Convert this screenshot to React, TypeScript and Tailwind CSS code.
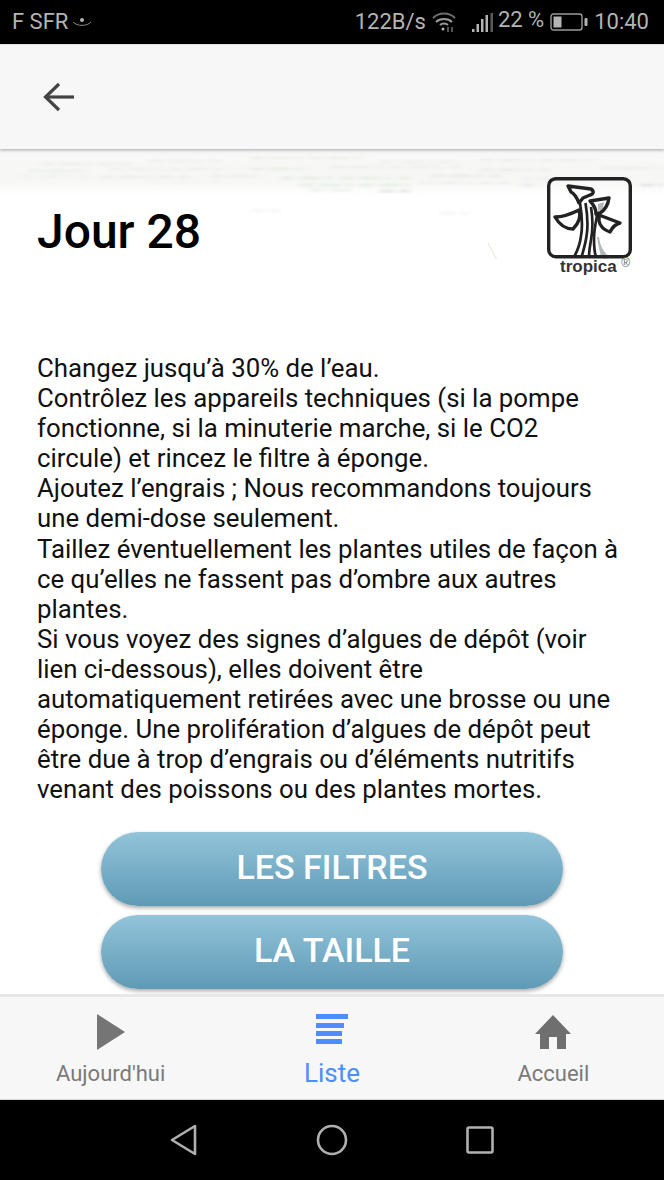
const bodyLines = [
  "Changez jusqu’à 30% de l’eau.",
  "Contrôlez les appareils techniques (si la pompe fonctionne, si la minuterie marche, si le CO2 circule) et rincez le filtre à éponge.",
  "Ajoutez l’engrais ; Nous recommandons toujours une demi-dose seulement.",
  "Taillez éventuellement les plantes utiles de façon à ce qu’elles ne fassent pas d’ombre aux autres plantes.",
  "Si vous voyez des signes d’algues de dépôt (voir lien ci-dessous), elles doivent être automatiquement retirées avec une brosse ou une éponge. Une prolifération d’algues de dépôt peut être due à trop d’engrais ou d’éléments nutritifs venant des poissons ou des plantes mortes.",
];

// faint water streaks of the background picture: x, y, length, colour
const streaks: [number, number, number, string][] = [
  [40, 15, 90, "#eef0ee"], [150, 12, 70, "#eef1ec"], [250, 9, 110, "#edf1e9"], [380, 13, 80, "#efefef"], [480, 11, 120, "#eef0ee"],
  [30, 22, 60, "#ecefec"], [110, 20, 120, "#eff1ef"], [250, 20, 60, "#e9eee5"], [330, 18, 130, "#edf0eb"], [480, 21, 70, "#ececec"], [600, 19, 64, "#eeeeee"],
  [20, 27, 70, "#f1f3f1"], [100, 28, 90, "#ecefe9"], [210, 27, 50, "#edf0eb"], [280, 29, 130, "#e9eee5"], [430, 27, 70, "#e8ece8"], [520, 30, 60, "#efefef"],
  [150, 33, 70, "#f4f4f4"], [300, 36, 110, "#e9eee7"], [420, 34, 90, "#efefef"], [520, 36, 20, "#ebebeb"], [640, 36, 24, "#e4e4e4"],
  [310, 41, 40, "#eff1ef"], [380, 42, 30, "#e6e6e6"], [250, 62, 30, "#f5f6f8"], [440, 64, 30, "#f5f6f8"],
];

function StatusBar() {
  return (
    <div className="flex h-[44px] items-center justify-between bg-black pl-[12px] pr-[15px] text-[22px] leading-none text-[#b4b4b4]">
      <div className="flex items-center gap-[4px]">
        <span>F SFR</span>
        <svg width="20" height="12" viewBox="0 0 20 12" fill="none">
          <circle cx="10" cy="4" r="2" fill="#b4b4b4" />
          <path d="M1 6c4 4.5 14 4.5 18 0" stroke="#8a8a8a" strokeWidth="1" />
        </svg>
      </div>
      <div className="flex items-center">
        <span>122B/s</span>
        <svg className="ml-[6px]" width="26" height="22" viewBox="0 0 26 22" fill="none" stroke="#9a9a9a" strokeWidth="2">
          <path d="M1 7c6-6 16-6 22 0" stroke="#6e6e6e" />
          <path d="M4 11c4-4 12-4 16 0" />
          <path d="M8 14c2-2 6-2 8 0" />
          <circle cx="11" cy="18" r="1.5" fill="#b4b4b4" stroke="none" />
          <path d="M16 16v5M20 16v5" stroke="#8a8a8a" strokeWidth="1.2" />
        </svg>
        <svg className="ml-[14px]" width="22" height="22" viewBox="0 0 22 22" fill="#b4b4b4">
          <rect x="0" y="18" width="2.5" height="3" />
          <rect x="4.5" y="13" width="2.5" height="8" />
          <rect x="9" y="8" width="2.5" height="13" />
          <rect x="13.5" y="4" width="2.5" height="17" />
          <rect x="18.5" y="2" width="2.5" height="19" fill="#5a5a5a" />
        </svg>
        <span className="ml-[4px] -translate-y-[2px]">22 %</span>
        <svg className="ml-[6px]" width="38" height="18" viewBox="0 0 38 18" fill="none">
          <rect x="1" y="1" width="31" height="16" rx="2.5" stroke="#9a9a9a" strokeWidth="1.4" />
          <rect x="3.5" y="3.5" width="8" height="11" fill="#b4b4b4" />
          <rect x="34.5" y="5" width="3" height="8" rx="1" fill="#b4b4b4" />
        </svg>
        <span className="ml-[6px]">10:40</span>
      </div>
    </div>
  );
}

function Logo() {
  return (
    <div className="flex w-[85px] flex-col">
      <svg width="85" height="83" viewBox="0 0 85 83" fill="none" stroke="#222" strokeLinejoin="round">
        <path d="M51 27l6-2-1 7-5 2zM50 60c1 8 3 14 4 21l6 1 1-3c-5-5-8-11-9-19z" fill="#b4b7bc" stroke="none" />
        <rect x="1.7" y="1.7" width="81.6" height="78" rx="7" strokeWidth="3.4" />
        <path d="M21 9l23 3c3 2 3 5-1 6l-7 3-4 5c-2-5-4-9-8-11z" strokeWidth="3.4" />
        <path d="M43 24l19-3c-1 7-4 12-9 15l-4 1c0-5-2-9-6-13z" strokeWidth="3.4" />
        <path d="M8 40c8 0 16-3 24-7 2 6 0 13-6 19-8 0-14-5-18-12z" strokeWidth="3.4" />
        <path d="M52 38l21 8c-4 1-7 3-10 9-6-2-10-6-11-11z" strokeWidth="3.4" />
        <path d="M33 26c2 12 3 22 1 33-1 8-3 14-7 21" strokeWidth="2.7" />
        <path d="M38.5 26c2 12 3 22 1 33-1 8-3 14-5 21" strokeWidth="2.7" />
        <path d="M44 30c2 12 2 22 0 33-1 6-2 11-2 17" strokeWidth="2.7" />
        <path d="M50 38c-1 8-3 14-3 24 0 6 0 12 2 18" strokeWidth="2.7" />
      </svg>
      <div className="relative mt-[-2px] pl-[13px] font-['Liberation_Sans',sans-serif] text-[17px] leading-[17px] font-bold text-[#333]">
        tropica
        <span className="absolute top-[-3px] right-[2px] text-[12px] font-normal text-[#666]">®</span>
      </div>
    </div>
  );
}

function FilterButton({ label }: { label: string }) {
  return (
    <button className="h-[74px] w-[462px] rounded-[37px] bg-gradient-to-b from-[#92c4da] to-[#5f9ab5] pb-[4px] text-[34px] font-medium text-white shadow-[0_2px_4px_rgba(0,0,0,0.35)]">
      {label}
    </button>
  );
}

function TabItem({ label, active, children }: { label: string; active?: boolean; children: React.ReactNode }) {
  return (
    <div className="flex w-[222px] flex-col items-center">
      <div className="flex h-[44px] items-center justify-center">{children}</div>
      <span className={active ? "mt-[3px] text-[26px] leading-[32px] text-[#4c8dff]" : "mt-[4px] text-[22px] leading-[32px] text-[#7a7a7a]"}>
        {label}
      </span>
    </div>
  );
}

export default function App() {
  return (
    <div className="flex h-[1180px] w-[664px] flex-col overflow-hidden bg-white font-['Roboto',sans-serif]">
      <StatusBar />
      <header className="relative z-10 flex h-[105px] items-center border-t border-[#e4e4e4] bg-[#f7f7f7] pl-[42px] shadow-[0_1px_3px_rgba(0,0,0,0.3)]">
        <svg width="34" height="32" viewBox="0 0 34 32" fill="none" stroke="#444" strokeWidth="3.2">
          <path d="M32 16H4" />
          <path d="M17 3L3.5 16 17 29" />
        </svg>
      </header>

      <main className="relative flex min-h-0 flex-1 flex-col overflow-hidden">
        <svg className="absolute inset-x-0 top-0" width="664" height="110" viewBox="0 0 664 110" fill="none">
          <defs>
            <filter id="soft" filterUnits="userSpaceOnUse" x="0" y="0" width="664" height="110">
              <feGaussianBlur stdDeviation="3 1" />
            </filter>
            <filter id="band" filterUnits="userSpaceOnUse" x="-20" y="-20" width="704" height="130">
              <feGaussianBlur stdDeviation="6 5" />
            </filter>
          </defs>
          <rect x="-10" y="6" width="684" height="34" fill="#f7f8f6" filter="url(#band)" />
          <g filter="url(#soft)" strokeWidth="3" strokeDasharray="14 5 22 4 8 6">
            {streaks.map(([x, y, len, color]) => (
              <path key={`${x}-${y}`} d={`M${x} ${y}h${len}`} stroke={color} />
            ))}
          </g>
          <path d="M488 94l9 17" stroke="#dfe6d6" strokeWidth="1" />
        </svg>
        <div className="absolute inset-x-0 top-0 h-[10px] bg-gradient-to-b from-[#f1f1f1] to-transparent" />
        <div className="relative flex items-start justify-between pt-[28px] pr-[32px] pl-[37px]">
          <h1 className="mt-[27px] text-[48px] leading-[56px] font-medium text-black">Jour 28</h1>
          <Logo />
        </div>
        <div className="relative mt-[78px] pr-[40px] pl-[37px] text-[25.8px] leading-[30.1px] text-[#111]">
          {bodyLines.map((line) => (
            <p key={line}>{line}</p>
          ))}
        </div>
        <div className="relative mt-[28px] flex flex-col items-center gap-[9px]">
          <FilterButton label="LES FILTRES" />
          <FilterButton label="LA TAILLE" />
        </div>
      </main>

      <nav className="flex h-[105px] justify-between border-t-[3px] border-[#e8e8e8] bg-[#f7f7f7] pt-[13px]">
        <TabItem label="Aujourd'hui">
          <svg width="28" height="36" viewBox="0 0 28 36" fill="#757575"><path d="M0 0l28 18L0 36z" /></svg>
        </TabItem>
        <TabItem label="Liste" active>
          <svg className="mb-[6px]" width="32" height="30" viewBox="0 0 32 30" fill="#4c8dff">
            <rect x="0" y="0" width="32" height="5" />
            <rect x="0" y="9" width="28" height="5" />
            <rect x="0" y="17" width="26" height="5" />
            <rect x="0" y="25" width="26" height="5" />
          </svg>
        </TabItem>
        <TabItem label="Accueil">
          <svg width="36" height="34" viewBox="0 0 36 34" fill="#6f6f6f">
            <path d="M18 0L36 19h-5v15H22V22h-8v12H5V19H0z" />
          </svg>
        </TabItem>
      </nav>

      <div className="flex h-[81px] items-center justify-center gap-[118px] border-t border-[#d8d8d8] bg-black">
        <svg width="28" height="32" viewBox="0 0 28 32" fill="none" stroke="#b0b0b0" strokeWidth="2.6" strokeLinejoin="round"><path d="M25 2v28L2 16z" /></svg>
        <svg width="32" height="32" viewBox="0 0 32 32" fill="none" stroke="#b0b0b0" strokeWidth="2.6"><circle cx="16" cy="16" r="14" /></svg>
        <svg width="28" height="28" viewBox="0 0 28 28" fill="none" stroke="#b0b0b0" strokeWidth="2.6" strokeLinejoin="round"><rect x="1.5" y="1.5" width="25" height="25" rx="1.5" /></svg>
      </div>
    </div>
  );
}
